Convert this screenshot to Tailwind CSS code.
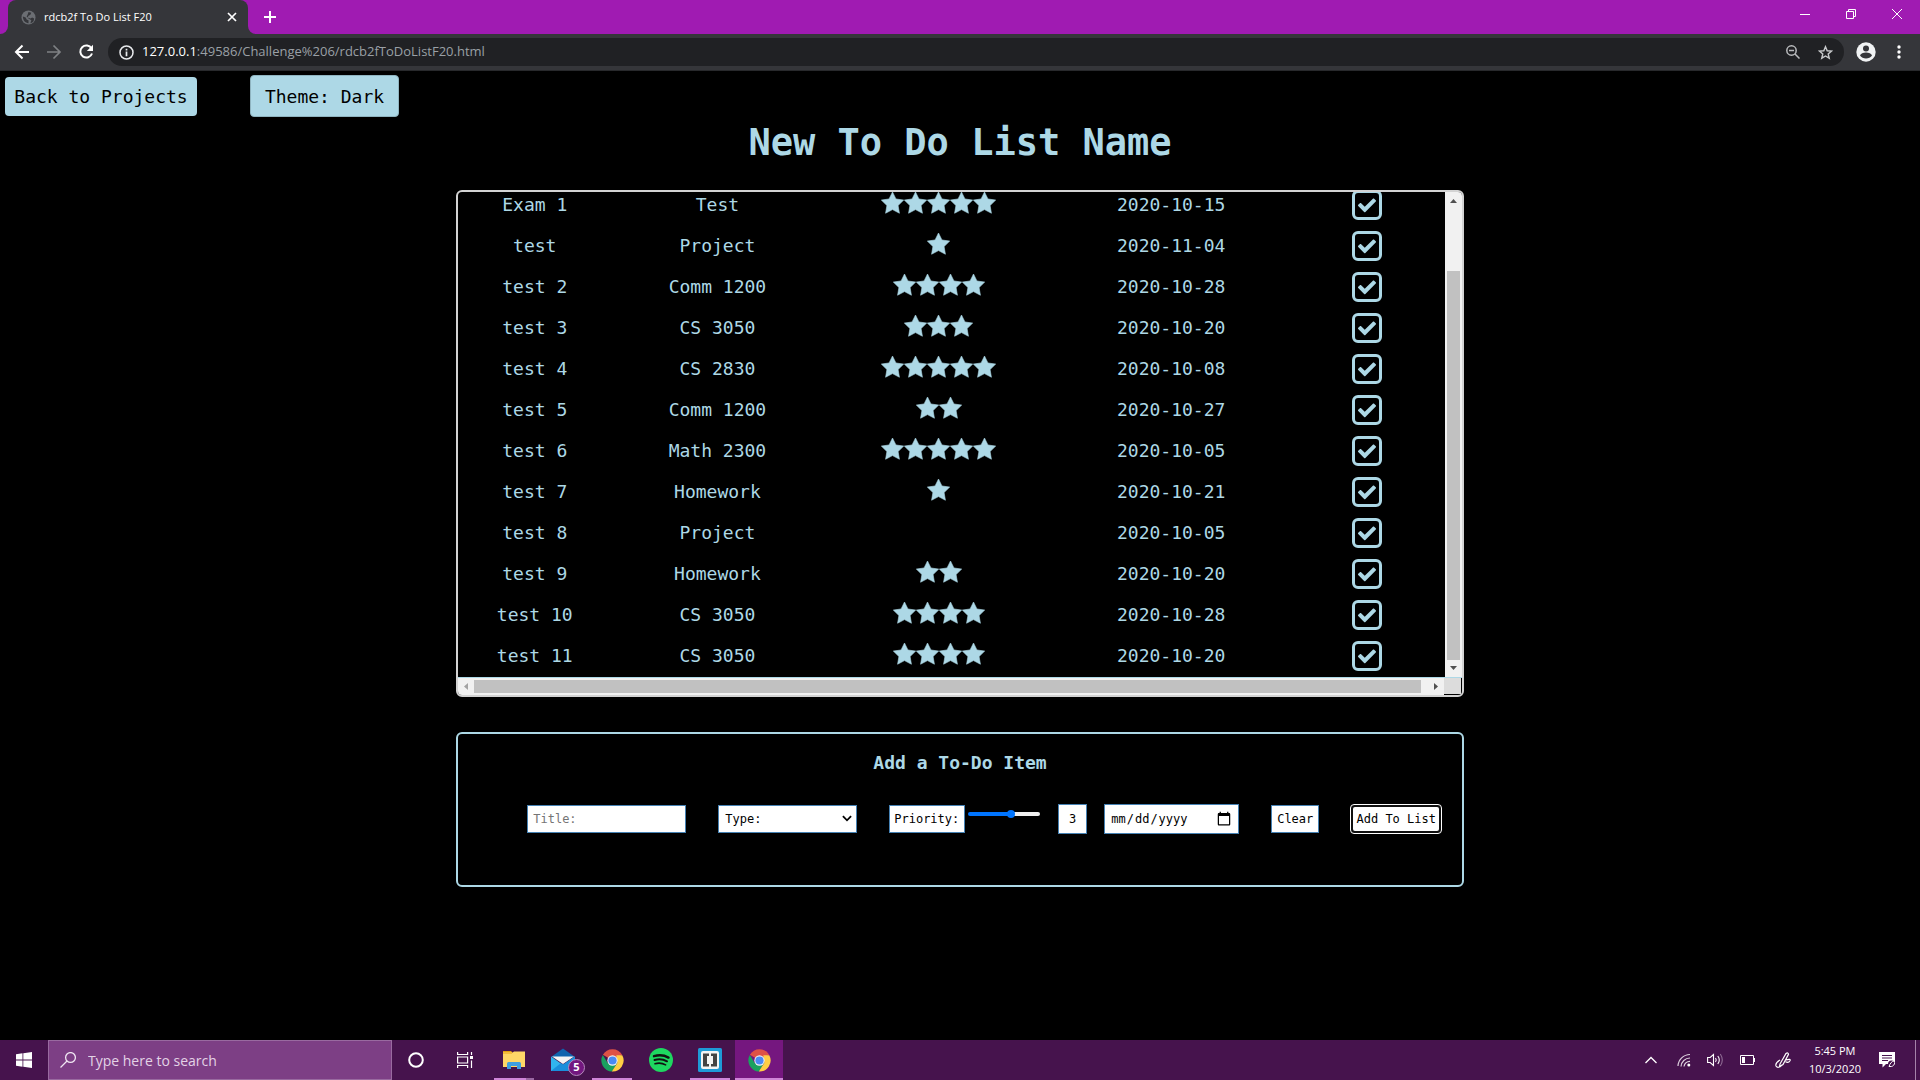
<!DOCTYPE html>
<html lang="en">
<head>
<meta charset="utf-8">
<title>rdcb2f To Do List F20</title>
<script src="https://cdn.jsdelivr.net/npm/@tailwindcss/browser@4"></script>
</head>
<body class="flex h-screen flex-col overflow-hidden bg-black font-['Open_Sans','Noto_Sans',sans-serif]">
<svg class="hidden" aria-hidden="true">
  <symbol id="star" viewBox="0 0 576 512"><path fill="currentColor" d="M288 0L208 162 28 188 158 315 127 494 288 410 449 494 418 315 548 188 368 162z" stroke="currentColor" stroke-width="14" stroke-linejoin="round"/></symbol>
  <symbol id="check" viewBox="0 0 512 512"><path fill="currentColor" d="M174 452L7 286c-10-10-10-26 0-36l46-46c10-10 26-10 36 0l103 103L423 76c10-10 26-10 36 0l46 46c10 10 10 26 0 36L210 452c-10 10-26 10-36 0z"/></symbol>
  <symbol id="chrome" viewBox="0 0 24 24">
    <path fill="#de5246" d="M12 12L2 6a11.500 11.500 0 0 1 20 0z"/>
    <path fill="#1aa15f" d="M1.900 6.200A11.500 11.500 0 0 0 11.500 23.500L17 14.500 12 12 7 14.500z"/>
    <path fill="#ffce44" d="M22.200 6.600A11.500 11.500 0 0 1 11.300 23.500L17 14.500 16 6.600z"/>
    <circle cx="12" cy="12" r="5.400" fill="#f1f1f1"/><circle cx="12" cy="12" r="4.300" fill="#4a8af4"/>
  </symbol>
</svg>

<!-- Tab strip -->
<div class="flex h-[34px] shrink-0 items-stretch bg-[#a01bb2] text-white">
  <div class="flex w-2 items-stretch bg-[#35363a]"><div class="flex-1 rounded-br-lg bg-[#a01bb2]"></div></div>
  <div class="flex w-60 items-center rounded-t-lg bg-[#35363a] pr-[11px] pl-[13px]">
    <svg class="mr-2 size-[15px]" viewBox="0 0 16 16"><circle cx="8" cy="8" r="7.500" fill="#6b6e73"/><path fill="#35363a" d="M2 7l3 1 1 2 2 1v3C4.500 14 2 11 2 7zM8 2l3 1-1 2-2 1-1 2 3 1 2-1 2 1c0 3-2 5-4 5l1-3-3-2-2-2 1-2z"/></svg>
    <span class="flex-1 text-[11px]">rdcb2f To Do List F20</span>
    <button aria-label="Close tab"><svg class="size-[10px]" viewBox="0 0 10 10" stroke="#fff" stroke-width="1.700"><path d="M1 1l8 8M9 1l-8 8"/></svg></button>
  </div>
  <div class="flex w-2 items-stretch bg-[#35363a]"><div class="flex-1 rounded-bl-lg bg-[#a01bb2]"></div></div>
  <button aria-label="New tab" class="ml-2"><svg class="size-3" viewBox="0 0 12 12" stroke="#fff" stroke-width="2"><path d="M6 0v12M0 6h12"/></svg></button>
  <div class="ml-auto flex items-center gap-9 pr-[18px] pb-[6px]">
    <button aria-label="Minimize"><svg class="size-[10px]" viewBox="0 0 10 10" stroke="#fff"><path d="M0 5.500h10"/></svg></button>
    <button aria-label="Restore"><svg class="size-[10px]" viewBox="0 0 10 10" fill="none" stroke="#fff"><path d="M.5 2.500h7v7h-7zM2.500 2.500v-2h7v7h-2"/></svg></button>
    <button aria-label="Close"><svg class="size-[10px]" viewBox="0 0 10 10" stroke="#fff"><path d="M0 0l10 10M10 0L0 10"/></svg></button>
  </div>
</div>

<!-- Toolbar -->
<div class="flex h-[37px] shrink-0 items-center border-b border-[#28292c] bg-[#35363a] pl-[14px]">
  <button aria-label="Back" class="mr-4"><svg class="size-4" viewBox="0 0 16 16" fill="none" stroke="#fff" stroke-width="2"><path d="M15 8H2M8.500 1.500L2 8l6.500 6.500"/></svg></button>
  <button aria-label="Forward" class="mr-4"><svg class="size-4" viewBox="0 0 16 16" fill="none" stroke="#7f8184" stroke-width="1.700"><path d="M1 8h13M7.500 1.500L14 8l-6.500 6.500"/></svg></button>
  <button aria-label="Reload" class="mr-[14px]"><svg class="size-4" viewBox="0 0 16 16" fill="none" stroke="#fff" stroke-width="2"><path d="M13.500 4.500A6 6 0 1 0 14 9.500"/><path fill="#fff" stroke="none" d="M15 .8V7H8.800z"/></svg></button>
  <div class="flex h-7 flex-1 items-center rounded-full bg-[#202124] px-[11px] text-[13px] text-[#9aa0a6]">
    <svg class="mr-2 size-[15px]" viewBox="0 0 15 15" fill="none" stroke="#e8eaed" stroke-width="1.500"><circle cx="7.500" cy="7.500" r="6.500"/><path stroke-width="1.700" d="M7.500 6.500v4.800M7.500 3.800v1.700"/></svg>
    <span class="flex-1"><span class="text-white">127.0.0.1</span>:49586/Challenge%206/rdcb2fToDoListF20.html</span>
    <svg class="mr-[18px] size-[14px]" viewBox="0 0 14 14" fill="none" stroke="#babcbe" stroke-width="1.500"><circle cx="5.500" cy="5.500" r="4.700"/><path d="M9 9l4.500 4.500M3 5.500h5"/></svg>
    <svg class="size-[15px]" viewBox="0 0 16 16" fill="none" stroke="#c8cacc" stroke-width="1.500"><path d="M8 1.800l1.800 4.300 4.700.4-3.600 3 1.100 4.600L8 11.700l-4 2.400 1.100-4.600-3.600-3 4.700-.4z"/></svg>
  </div>
  <button aria-label="Profile" class="mr-[21px] ml-3"><svg class="size-5" viewBox="0 0 20 20"><circle cx="10" cy="10" r="9.700" fill="#f1f3f4"/><circle cx="10" cy="6.500" r="3" fill="#35363a"/><path fill="#35363a" d="M4 13.500c1-4 11-4 12 0-2.500 4-9.500 4-12 0z"/></svg></button>
  <button aria-label="Menu" class="mr-[19px]"><svg class="h-[14px] w-1" viewBox="0 0 4 14" fill="#fff"><circle cx="2" cy="2" r="1.700"/><circle cx="2" cy="7" r="1.700"/><circle cx="2" cy="12" r="1.700"/></svg></button>
</div>

<!-- Page -->
<main class="flex-1 px-[5px] pt-1 font-['DejaVu_Sans_Mono',monospace] text-[18px] text-[#add8e6]">
  <nav class="flex items-center gap-[53px] text-black">
    <a href="#" class="flex h-[39px] w-48 items-center justify-center rounded bg-[#add8e6]">Back to Projects</a>
    <button class="h-[42px] w-[149px] rounded border border-[#8fb4c0] bg-[#add8e6]">Theme: Dark</button>
  </nav>
  <h1 class="mt-[2px] mb-[23px] text-center text-[37px] leading-[48px] font-bold">New To Do List Name</h1>

  <section class="mx-auto w-[52.800%] overflow-hidden rounded-md border-2 border-[#d3d3d3]">
    <div class="flex">
      <div class="flex-1 overflow-hidden pb-px">
        <table class="-mt-2 w-full table-fixed text-center">
          <colgroup><col class="w-[15.600%]"><col class="w-[21.400%]"><col class="w-[23.400%]"><col class="w-[23.700%]"><col class="w-[15.900%]"></colgroup>
          <tbody id="rows"></tbody>
        </table>
      </div>
      <div class="flex w-[17px] flex-col items-center bg-[#f1f1f1]">
        <svg class="mt-[7px] h-1 w-[7px]" viewBox="0 0 7 4" fill="#505050"><path d="M0 4L3.500 0 7 4z"/></svg>
        <div class="mt-[68px] w-[13px] flex-1 bg-[#c1c1c1]"></div>
        <svg class="mt-[6px] mb-[7px] h-1 w-[7px]" viewBox="0 0 7 4" fill="#505050"><path d="M0 0l3.500 4L7 0z"/></svg>
      </div>
    </div>
    <div class="flex h-[18px] border-t border-[#add8e6]">
      <div class="flex flex-1 items-center bg-[#f1f1f1]">
        <svg class="mx-[6px] h-[7px] w-1" viewBox="0 0 4 7" fill="#a3a3a3"><path d="M4 0L0 3.500 4 7z"/></svg>
        <div class="h-[13px] flex-1 bg-[#c1c1c1]"></div>
        <svg class="mr-[6px] ml-[13px] h-[7px] w-1" viewBox="0 0 4 7" fill="#505050"><path d="M0 0l4 3.500L0 7z"/></svg>
      </div>
      <div class="mr-px mb-px w-[17px] bg-[#dcdcdc]"></div>
    </div>
  </section>

  <form class="mx-auto mt-[35px] w-[52.800%] rounded-md border-2 border-[#add8e6] pt-4 pb-[51px]">
    <h2 class="text-center leading-[26px] font-bold">Add a To-Do Item</h2>
    <div class="mt-[28px] flex items-center justify-end pr-5 text-[12px] text-black">
      <input aria-label="Title" placeholder="Title:" class="mr-8 h-7 w-[159px] border border-[#4682b4] bg-white px-[5px] placeholder:text-[#757575]">
      <div class="relative mr-8">
        <select aria-label="Type" class="block h-7 w-[139px] appearance-none border border-[#4682b4] bg-white px-[6px]"><option>Type:</option></select>
        <svg class="pointer-events-none absolute top-[10px] right-[5px] h-[7px] w-[10px]" viewBox="0 0 11 7" fill="none" stroke="#000" stroke-width="2"><path d="M1 1l4.500 4.500L10 1"/></svg>
      </div>
      <label for="priority" class="flex h-7 w-[76px] items-center border border-[#4682b4] bg-white px-1">Priority:</label>
      <input id="priority" type="range" min="0" max="5" value="3" class="mr-[18px] mb-[10px] ml-[3px] h-1 w-[72px] appearance-none rounded-full bg-[linear-gradient(to_right,#0075ff_58%,#efefef_58%)] [&::-webkit-slider-thumb]:size-2 [&::-webkit-slider-thumb]:appearance-none [&::-webkit-slider-thumb]:rounded-full [&::-webkit-slider-thumb]:bg-[#0075ff]">
      <output for="priority" class="mr-[17px] flex h-[30px] w-[29px] items-center justify-center border border-[#4682b4] bg-white">3</output>
      <input type="date" aria-label="Due date" class="mr-8 h-[30px] w-[135px] border border-[#4682b4] bg-white pr-[6px] pl-[5px] [&::-webkit-calendar-picker-indicator]:size-4 [&::-webkit-calendar-picker-indicator]:p-0">
      <button type="reset" class="mr-[31px] h-7 w-12 border border-[#4682b4] bg-white">Clear</button>
      <button type="button" class="flex h-[30px] w-[92px] rounded border border-white bg-[#101010] p-[2px]"><span class="flex flex-1 items-center justify-center rounded-xs bg-white">Add To List</span></button>
    </div>
  </form>
</main>

<!-- Taskbar -->
<footer class="flex h-10 shrink-0 items-stretch bg-[#46134d] text-white">
  <button aria-label="Start" class="flex w-12 items-center justify-center"><svg class="size-4" viewBox="0 0 16 16" fill="#fff"><path d="M0 2.200L6.500 1.300V7.600H0zM7.300 1.200L16 0v7.600H7.300zM0 8.400h6.500v6.300L0 13.800zM7.300 8.400H16V16l-8.700-1.200z"/></svg></button>
  <label class="flex w-[344px] items-center border border-[#996aa0] bg-[#7d3f85] pl-[11px]">
    <svg class="mr-3 size-4" viewBox="0 0 16 16" fill="none" stroke="#f0e6f2" stroke-width="1.300"><circle cx="10.500" cy="5.500" r="4.900"/><path d="M7 9L.5 15.500"/></svg>
    <input aria-label="Search" placeholder="Type here to search" class="flex-1 text-[14px] outline-none placeholder:text-[#e3d3e6]">
  </label>
  <div class="flex gap-px">
    <button aria-label="Cortana" class="flex w-12 items-center justify-center"><svg class="size-4" viewBox="0 0 16 16" fill="none" stroke="#fff" stroke-width="2"><circle cx="8" cy="8" r="6.800"/></svg></button>
    <button aria-label="Task view" class="flex w-12 items-center justify-center"><svg class="size-4" viewBox="0 0 16 16" fill="none" stroke="#fff" stroke-width="1.200"><path d="M.6 0v2.500h10V0M.6 16v-2.500h10V16M.6 5h10v6H.6zM14.500 0v3M14.500 8.500V16"/><path fill="#fff" stroke="none" d="M13 4h3v3h-3z"/></svg></button>
    <button aria-label="File Explorer" class="relative flex w-12 items-center justify-center"><svg class="size-[22px]" viewBox="0 0 22 22"><path fill="#e3a20f" d="M0 2h8l2 2H0z"/><path fill="#ffd767" d="M0 4h9l2-1.500h11V18H0z"/><path fill="#f5bd3c" d="M0 3h9v2H0z"/><path fill="#3f9fe0" d="M4 20v-5.500q0-1.500 1.500-1.500h11q1.500 0 1.500 1.500V20h-4v-3H8v3z"/></svg><span class="absolute bottom-0 left-1 h-[2px] w-8 bg-[#cf85d8]"></span><span class="absolute right-1 bottom-0 h-[2px] w-2 bg-[#9a68a2]"></span></button>
    <button aria-label="Mail, 5 unread" class="relative flex w-12 items-center justify-center"><svg class="size-6" viewBox="0 0 24 24"><path fill="#1064ae" d="M0 9L12 .5 24 9z"/><path fill="#f4f4f4" d="M1 8.500h22L12 16z"/><path fill="#31b4ee" d="M0 8.500L12 17l12-8.500V23H0z"/><path fill="#1a8edb" d="M0 23l10-8 2 1.500L24 8.500V23z"/></svg><span class="absolute right-[2px] bottom-1 flex size-[17px] items-center justify-center rounded-full border border-[#b48abb] bg-[#73177f] text-[11px] font-bold">5</span></button>
    <button aria-label="Chrome" class="relative flex w-12 items-center justify-center"><svg class="size-[23px]"><use href="#chrome"/></svg><span class="absolute inset-x-1 bottom-0 h-[2px] bg-[#cf85d8]"></span></button>
    <button aria-label="Spotify" class="flex w-12 items-center justify-center"><svg class="size-6" viewBox="0 0 24 24" fill="none" stroke="#111" stroke-linecap="round"><circle cx="12" cy="12" r="12" fill="#1ed760" stroke="none"/><path stroke-width="2.400" d="M5 8.200c5-1.500 10.500-.9 14.500 1.400"/><path stroke-width="2" d="M5.500 12c4.500-1.300 9-.7 12.500 1.300"/><path stroke-width="1.600" d="M6 15.700c3.800-1 7.500-.6 10.600 1.200"/></svg></button>
    <button aria-label="Brackets" class="relative flex w-12 items-center justify-center"><svg class="size-6" viewBox="0 0 24 24"><rect width="24" height="24" rx="1.500" fill="#1e9bd7"/><rect x="3" y="3" width="18" height="18" rx="2" fill="#f4f4f4"/><path fill="#444" d="M5 5.500h6V8H9v8h2v2.500H5zM19 5.500h-6V8h2v8h-2v2.500h6z"/></svg><span class="absolute inset-x-1 bottom-0 h-[2px] bg-[#cf85d8]"></span></button>
    <button aria-label="Chrome, active" class="relative flex w-12 items-center justify-center bg-[#75177f]"><svg class="size-[23px]"><use href="#chrome"/></svg><span class="absolute inset-x-0 bottom-0 h-[2px] bg-[#cf85d8]"></span></button>
  </div>
  <div class="ml-auto flex items-center">
    <svg class="mr-5 h-2 w-3" viewBox="0 0 12 8" fill="none" stroke="#fff" stroke-width="1.300"><path d="M.5 7L6 1.500 11.500 7"/></svg>
    <svg class="mr-4 size-[14px]" viewBox="0 0 14 14" fill="none" stroke="#ddd0de" stroke-width="1.200"><path d="M1 13A12 12 0 0 1 13 1.500M4 13.500A9 9 0 0 1 13 5M7 13.500A6 6 0 0 1 13 8.300"/><circle cx="11.800" cy="12" r="1.500" fill="#fff" stroke="none"/></svg>
    <svg class="mr-4 h-[14px] w-[17px]" viewBox="0 0 17 14" fill="none" stroke="#fff" stroke-width="1.100"><path d="M.6 4.500h2.600L6.500 1.500v11L3.200 9.500H.6zM8.500 5q1.500 2 0 4M10.800 3q3 4 0 8"/><path stroke="#8d6a92" d="M13.300 1q4 6 0 12"/></svg>
    <svg class="mr-5 h-[10px] w-[15px]" viewBox="0 0 15 10" fill="none" stroke="#fff"><path d="M.5.5h13v9H.5zM14.500 3v4"/><path fill="#fff" stroke="none" d="M2 2h3v6H2z"/></svg>
    <svg class="mr-[18px] size-4" viewBox="0 0 16 16" fill="none" stroke="#fff" stroke-width="1.200"><path d="M5 12L11 1.500q2-1.500 2.500.8L8 12.500l-3.500 2zM5 8q-5 3-4 6 2 3 6-1M11 8q5-1.500 4 .7-1.500 2.500-4.500 1"/></svg>
    <div class="mr-[18px] text-center text-[11px] leading-[18px]">5:45 PM<br>10/3/2020</div>
    <svg class="mr-5 size-4" viewBox="0 0 16 16"><path fill="#fff" d="M0 0h16v12H7l-3.500 3.500V12H0z"/><path stroke="#46134d" d="M3 3.500h10M3 6h10M3 8.500h6"/><circle cx="12.500" cy="12" r="3.500" fill="#46134d"/><path fill="none" stroke="#fff" d="M10 14.500c1-3 3-5.500 5-5.500s.5 5-2.500 5.500H10"/></svg>
    <div class="mr-1 h-10 w-px bg-[#a583aa]"></div>
  </div>
</footer>

<script>
const items = [
  ["Exam 1","Test",5,"2020-10-15"],["test","Project",1,"2020-11-04"],["test 2","Comm 1200",4,"2020-10-28"],
  ["test 3","CS 3050",3,"2020-10-20"],["test 4","CS 2830",5,"2020-10-08"],["test 5","Comm 1200",2,"2020-10-27"],
  ["test 6","Math 2300",5,"2020-10-05"],["test 7","Homework",1,"2020-10-21"],["test 8","Project",0,"2020-10-05"],
  ["test 9","Homework",2,"2020-10-20"],["test 10","CS 3050",4,"2020-10-28"],["test 11","CS 3050",4,"2020-10-20"]];
const star = '<svg class="-mx-px h-[22px] w-[25px]"><use href="#star"/></svg>';
document.getElementById("rows").innerHTML = items.map(([title, type, stars, date]) => `
  <tr class="h-[41px]">
    <td>${title}</td><td>${type}</td>
    <td><div class="flex justify-center pb-1">${star.repeat(stars)}</div></td>
    <td>${date}</td>
    <td><button aria-label="Complete ${title}" class="mx-auto flex size-[30px] items-center justify-center rounded-md border-3 border-[#add8e6]"><svg class="size-[18px]"><use href="#check"/></svg></button></td>
  </tr>`).join("");
</script>
</body>
</html>
